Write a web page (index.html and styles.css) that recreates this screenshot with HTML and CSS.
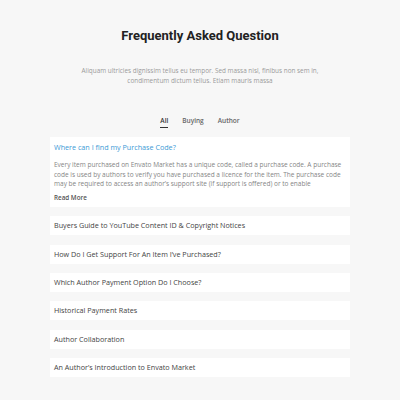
FILE: index.html
```html
<!DOCTYPE html>
<html lang="en">
<head>
  <meta charset="UTF-8">
  <title>Frequently Asked Question</title>
  <meta name="viewport" content="width=device-width, initial-scale=1.0">
  <link rel="stylesheet" href="styles.css">
</head>

<body>

  <section class="faq">
    <h1 class="faq-title">Frequently Asked Question</h1>
    <p class="faq-intro">Aliquam ultricies dignissim tellus eu tempor. Sed massa nisl, finibus non sem in, condimentum dictum tellus. Etiam mauris massa</p>

    <!-- tabs -->
    <ul class="faq-tabs">
      <li class="tab active">All</li>
      <li class="tab">Buying</li>
      <li class="tab">Author</li>
    </ul>

    <div class="faq-list">
      <div class="faq-item open">
        <div class="faq-q">Where can I find my Purchase Code?</div>
        <p class="faq-a">Every item purchased on Envato Market has a unique code, called a purchase code. A purchase code is used by authors to verify you have purchased a licence for the item. The purchase code may be required to access an author’s support site (if support is offered) or to enable</p>
        <a class="read-more" href="#">Read More</a>
      </div>
      <div class="faq-item"><div class="faq-q">Buyers Guide to YouTube Content ID &amp; Copyright Notices</div></div>
      <div class="faq-item"><div class="faq-q">How Do I Get Support For An Item I’ve Purchased?</div></div>
      <div class="faq-item"><div class="faq-q">Which Author Payment Option Do I Choose?</div></div>
      <div class="faq-item"><div class="faq-q">Historical Payment Rates</div></div>
      <div class="faq-item"><div class="faq-q">Author Collaboration</div></div>
      <div class="faq-item"><div class="faq-q">An Author’s Introduction to Envato Market</div></div>
    </div>
  </section>

</body>
</html>
```

FILE: styles.css
```css
html, body {
  margin: 0;
  padding: 0;
  background: #f7f7f7;
  font-family: 'Open Sans', sans-serif;
}

.faq {
  width: 300px;
  margin: 0 auto;
  padding-top: 26px;
}

.faq-title {
  margin: 0;
  font-family: Roboto, sans-serif;
  font-size: 13px;
  font-weight: 700;
  line-height: 20px;
  color: #222;
  text-align: center;
}

.faq-intro {
  width: 250px;
  margin: 20px auto 0;
  font-size: 6.4px;
  line-height: 10px;
  color: #9a9a9a;
  text-align: center;
}

.faq-tabs {
  display: flex;
  justify-content: center;
  gap: 14px;
  list-style: none;
  margin: 30px 0 0;
  padding: 0;
}

.tab {
  font-size: 6.5px;
  font-weight: 600;
  line-height: 10px;
  color: #666;
  padding-bottom: 1px;
  border-bottom: 1px solid transparent;
}

.tab.active {
  color: #333;
  border-bottom-color: #333;
}

.faq-list {
  display: flex;
  flex-direction: column;
  gap: 9.4px;
  margin-top: 9px;
}

.faq-item {
  background: #fff;
  padding: 0 5px 0 4px;
}

.faq-q {
  font-size: 7.2px;
  line-height: 19px;
  color: #444;
}

.faq-item.open {
  padding-top: 1px;
  padding-bottom: 4px;
}

.faq-item.open .faq-q {
  color: #3c9ad6;
}

.faq-a {
  width: 292px;
  margin: 3px 0 0;
  font-size: 6.5px;
  line-height: 9.6px;
  color: #858585;
}

.read-more {
  display: block;
  margin-top: 4px;
  font-size: 6.3px;
  font-weight: 600;
  line-height: 10px;
  color: #555;
  text-decoration: none;
}
```
